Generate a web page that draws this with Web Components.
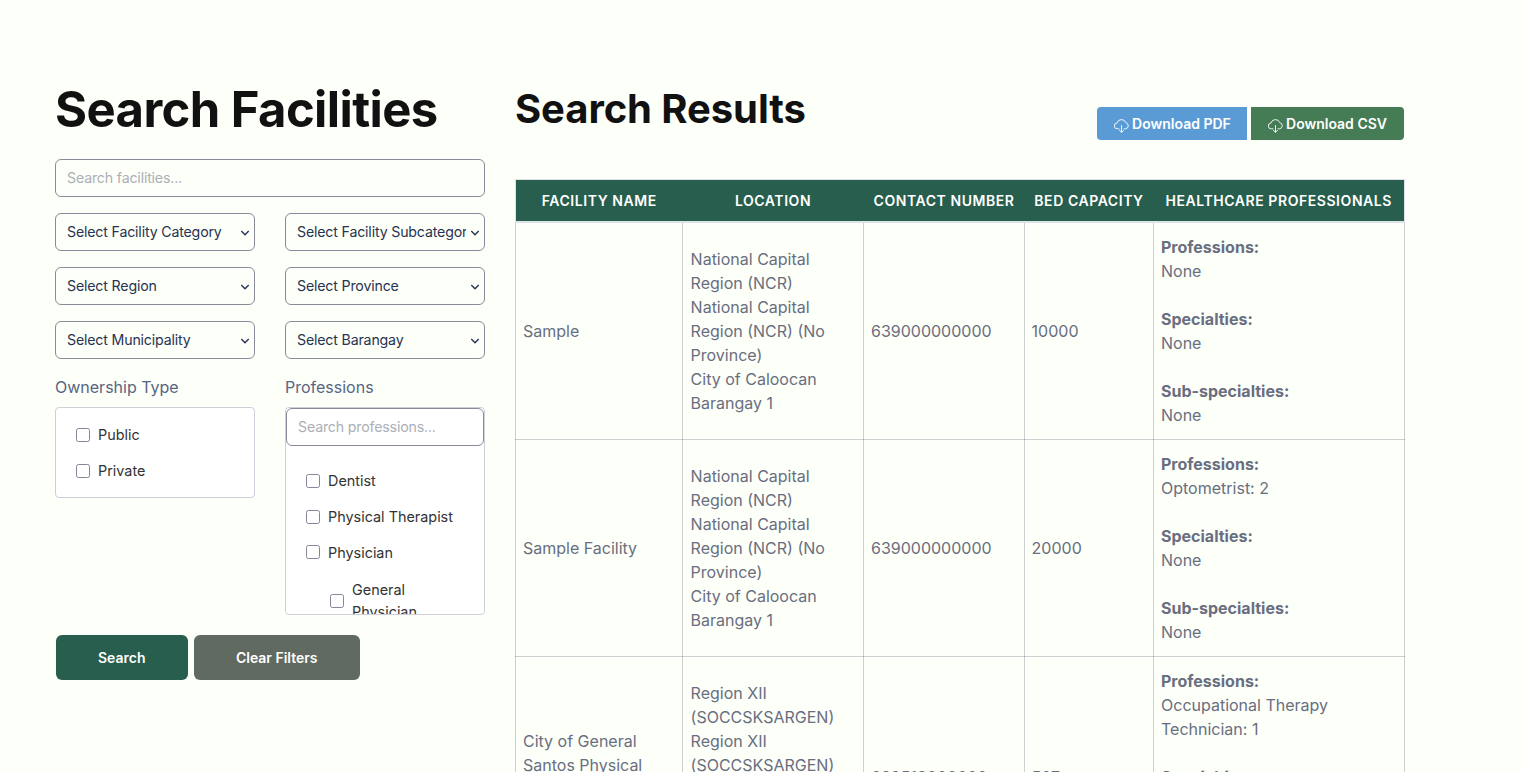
<!DOCTYPE html>
<html lang="en">
<head>
<meta charset="utf-8">
<title>Search Facilities</title>
<style>
  html { height: 100%; overflow: hidden; }
  body {
    margin: 0;
    height: 100%;
    overflow: hidden;
    background: #fdfff9;
    color: #696e80;
    font: 400 16px/24px Inter, "Liberation Sans", sans-serif;
  }
</style>
</head>
<body>
<facility-page>
  <search-form slot="filters">
    <select-field label="Select Facility Category"></select-field>
    <select-field label="Select Facility Subcategory"></select-field>
    <select-field label="Select Region"></select-field>
    <select-field label="Select Province"></select-field>
    <select-field label="Select Municipality"></select-field>
    <select-field label="Select Barangay"></select-field>
    <check-group slot="groups" label="Ownership Type">
      <check-item>Public</check-item>
      <check-item>Private</check-item>
    </check-group>
    <check-group slot="groups" label="Professions" search="Search professions...">
      <check-item>Dentist</check-item>
      <check-item>Physical Therapist</check-item>
      <check-item class="parent">Physician</check-item>
      <check-item class="nested">General Physician</check-item>
    </check-group>
    <form-button slot="actions">Search</form-button>
    <form-button slot="actions" kind="muted">Clear Filters</form-button>
  </search-form>
  <download-button slot="downloads" kind="pdf">Download PDF</download-button>
  <download-button slot="downloads" kind="csv">Download CSV</download-button>
  <results-table slot="results"></results-table>
</facility-page>

<script>
function define(name, html, setup) {
  const template = document.createElement('template');
  template.innerHTML = html;

  customElements.define(name, class extends HTMLElement {
    constructor() {
      super();
      this.attachShadow({ mode: 'open' });
      this.shadowRoot.appendChild(template.content.cloneNode(true));
    }

    connectedCallback() {
      if (setup) setup(this, this.shadowRoot);
    }
  });
}

// shared by every text input and select
const fieldStyle = `
  input, select {
    box-sizing: border-box;
    display: block;
    width: 100%;
    height: 38px;
    margin: 0;
    border: 1px solid #8a8a9a;
    border-radius: 6px;
    background: transparent;
    color: #273352;
    font: 400 14.2px/20px Inter, "Liberation Sans", sans-serif;
    letter-spacing: -.18px;
    outline: none;
  }
  input { padding: 0 11px 2px; }
  input::placeholder { color: #acafb7; opacity: 1; }
  select { appearance: none; padding: 0 18px 0 11px; }
`;

define('facility-page', `
  <style>
    :host {
      display: grid;
      grid-template-columns: 430px 890px;
      column-gap: 30px;
      padding: 80px 0 0 55px;
    }
    header {
      display: flex;
      justify-content: space-between;
      height: 60px;
      padding-right: 1px;
    }
    h2 {
      margin: 0;
      color: #111;
      font-size: 40px;
      line-height: 58px;
      font-weight: 700;
      letter-spacing: -.08px;
    }
    .downloads { display: flex; gap: 4px; padding-top: 27px; }
    .results { padding-top: 39px; }
  </style>
  <slot name="filters"></slot>
  <section>
    <header>
      <h2>Search Results</h2>
      <div class="downloads"><slot name="downloads"></slot></div>
    </header>
    <div class="results"><slot name="results"></slot></div>
  </section>
`);

define('search-form', `
  <style>
    ${fieldStyle}
    :host { display: block; }
    h1 {
      margin: 0 0 19px;
      color: #111;
      font-size: 49px;
      line-height: 60px;
      font-weight: 700;
      letter-spacing: -.6px;
      white-space: nowrap;
    }
    .grid {
      display: grid;
      grid-template-columns: 200px 200px;
      gap: 16px 30px;
      margin-top: 16px;
    }
    .groups { align-items: start; }
    .actions { display: flex; gap: 6px; padding: 20px 0 0 1px; }
  </style>
  <h1>Search Facilities</h1>
  <input type="text" placeholder="Search facilities...">
  <div class="grid"><slot></slot></div>
  <div class="grid groups"><slot name="groups"></slot></div>
  <div class="actions"><slot name="actions"></slot></div>
`);

define('select-field', `
  <style>
    ${fieldStyle}
    :host { display: grid; align-items: center; }
    select, svg { grid-area: 1 / 1; }
    svg {
      justify-self: end;
      width: 10px;
      height: 6px;
      margin: 2px 5px 0 0;
      pointer-events: none;
    }
  </style>
  <select><option></option></select>
  <svg viewBox="0 0 10 6" fill="none" stroke="#273352" stroke-width="1.4"><path d="M1.3 1 5 4.7 8.7 1"/></svg>
`, (el, root) => {
  root.querySelector('option').textContent = el.getAttribute('label');
});

define('check-group', `
  <style>
    ${fieldStyle}
    :host { display: block; }
    .label { color: #586583; margin-bottom: 8px; }
    .box {
      box-sizing: border-box;
      border: 1px solid #cfcfdb;
      border-radius: 4px;
      background: #fff;
      max-height: 208px;
      overflow: hidden;
    }
    .items { padding: 9px 20px 8px; }
    input + .items { padding-top: 17px; }
  </style>
  <div class="label"></div>
  <div class="box"><div class="items"><slot></slot></div></div>
`, (el, root) => {
  root.querySelector('.label').textContent = el.getAttribute('label');
  if (el.hasAttribute('search')) {
    const input = document.createElement('input');
    input.placeholder = el.getAttribute('search');
    root.querySelector('.box').prepend(input);
  }
});

define('check-item', `
  <style>
    :host {
      display: block;
      padding: 7px 0;
      color: #333;
      font-size: 14.4px;
      line-height: 22px;
    }
    :host(.nested) { padding: 8px 0 7px 24px; }
    label { display: flex; align-items: center; gap: 8px; }
    i {
      box-sizing: border-box;
      flex: none;
      width: 14px;
      height: 14px;
      border: 1px solid #85859a;
      border-radius: 2.5px;
      background: #fff;
    }
    :host(.parent) i { margin-bottom: 2px; }
  </style>
  <label><i></i><span><slot></slot></span></label>
`);

define('form-button', `
  <style>
    :host { display: block; }
    button {
      height: 45px;
      margin: 0;
      padding: 0 42px;
      border: 0;
      border-radius: 6px;
      background: #285e4d;
      color: #fff;
      font: 600 14px/20px Inter, "Liberation Sans", sans-serif;
    }
    :host([kind="muted"]) button { padding: 0 42.4px; background: #606a61; }
  </style>
  <button><slot></slot></button>
`);

define('download-button', `
  <style>
    :host { display: block; }
    button {
      display: flex;
      align-items: center;
      gap: 3px;
      height: 33px;
      margin: 0;
      padding: 0 17px;
      border: 0;
      background: #5b9bd5;
      color: #fff;
      font: 600 14px/20px Inter, "Liberation Sans", sans-serif;
    }
    :host([kind="pdf"]) button { padding-right: 16.2px; border-radius: 4px 0 0 4px; }
    :host([kind="csv"]) button { border-radius: 0 4px 4px 0; background: #457b55; }
    svg { width: 15px; height: 14px; margin-top: 5px; }
  </style>
  <button>
    <svg viewBox="0 0 15 14" fill="none" stroke="currentColor" stroke-width=".9" stroke-linecap="round" stroke-linejoin="round">
      <path d="M5 9.8H3.5A2.9 2.9 0 0 1 3 4 4.6 4.6 0 0 1 11.8 3.7 3.1 3.1 0 0 1 11.6 9.8H10"/>
      <path d="M7.5 6.5V13.2M5.5 11.3l2 2 2-2"/>
    </svg>
    <span><slot></slot></span>
  </button>
`);

const facilities = [
  {
    name: 'Sample',
    location: ['National Capital Region (NCR)', 'National Capital Region (NCR) (No Province)', 'City of Caloocan', 'Barangay 1'],
    contact: '639000000000',
    beds: '10000',
    professions: 'None',
  },
  {
    name: 'Sample Facility',
    location: ['National Capital Region (NCR)', 'National Capital Region (NCR) (No Province)', 'City of Caloocan', 'Barangay 1'],
    contact: '639000000000',
    beds: '20000',
    professions: 'Optometrist: 2',
  },
  {
    name: 'City of General Santos Physical Therapy and Rehab Center',
    location: ['Region XII (SOCCSKSARGEN)', 'Region XII (SOCCSKSARGEN) (No Province)', 'City of General Santos', 'Lagao'],
    contact: '639513000000',
    beds: '507',
    professions: 'Occupational Therapy Technician: 1',
  },
];

define('results-table', `
  <style>
    :host { display: block; }
    table {
      width: 890px;
      table-layout: fixed;
      border-collapse: collapse;
    }
    th {
      height: 41px;
      padding: 0;
      border-top: 1px solid #dee2e6;
      border-bottom: 2px solid #dee2e6;
      background: #285e4d;
      color: #fff;
      font-size: 14px;
      line-height: 20px;
      font-weight: 600;
      letter-spacing: .56px;
      white-space: nowrap;
    }
    th:first-child { border-left: 1px solid #dee2e6; }
    th:last-child { border-right: 1px solid #dee2e6; }
    td {
      padding: 12px 7px;
      border: 1px solid rgba(52, 58, 82, .24);
      vertical-align: middle;
    }
    td:nth-child(2) { padding-left: 7.6px; }
    td:nth-child(4) { padding-left: 6.6px; }
    b { font-weight: 700; }
  </style>
  <table>
    <colgroup>
      <col style="width: 167px"><col style="width: 181px"><col style="width: 161px"><col style="width: 129px"><col>
    </colgroup>
    <thead>
      <tr>
        <th>FACILITY NAME</th><th>LOCATION</th><th>CONTACT NUMBER</th><th>BED CAPACITY</th><th>HEALTHCARE PROFESSIONALS</th>
      </tr>
    </thead>
    <tbody></tbody>
  </table>
`, (el, root) => {
  root.querySelector('tbody').innerHTML = facilities.map(f => `
    <tr>
      <td>${f.name}</td>
      <td>${f.location.join('<br>')}</td>
      <td>${f.contact}</td>
      <td>${f.beds}</td>
      <td>
        <b>Professions:</b><br>${f.professions}<br><br>
        <b>Specialties:</b><br>None<br><br>
        <b>Sub-specialties:</b><br>None
      </td>
    </tr>`).join('');
});
</script>
</body>
</html>
